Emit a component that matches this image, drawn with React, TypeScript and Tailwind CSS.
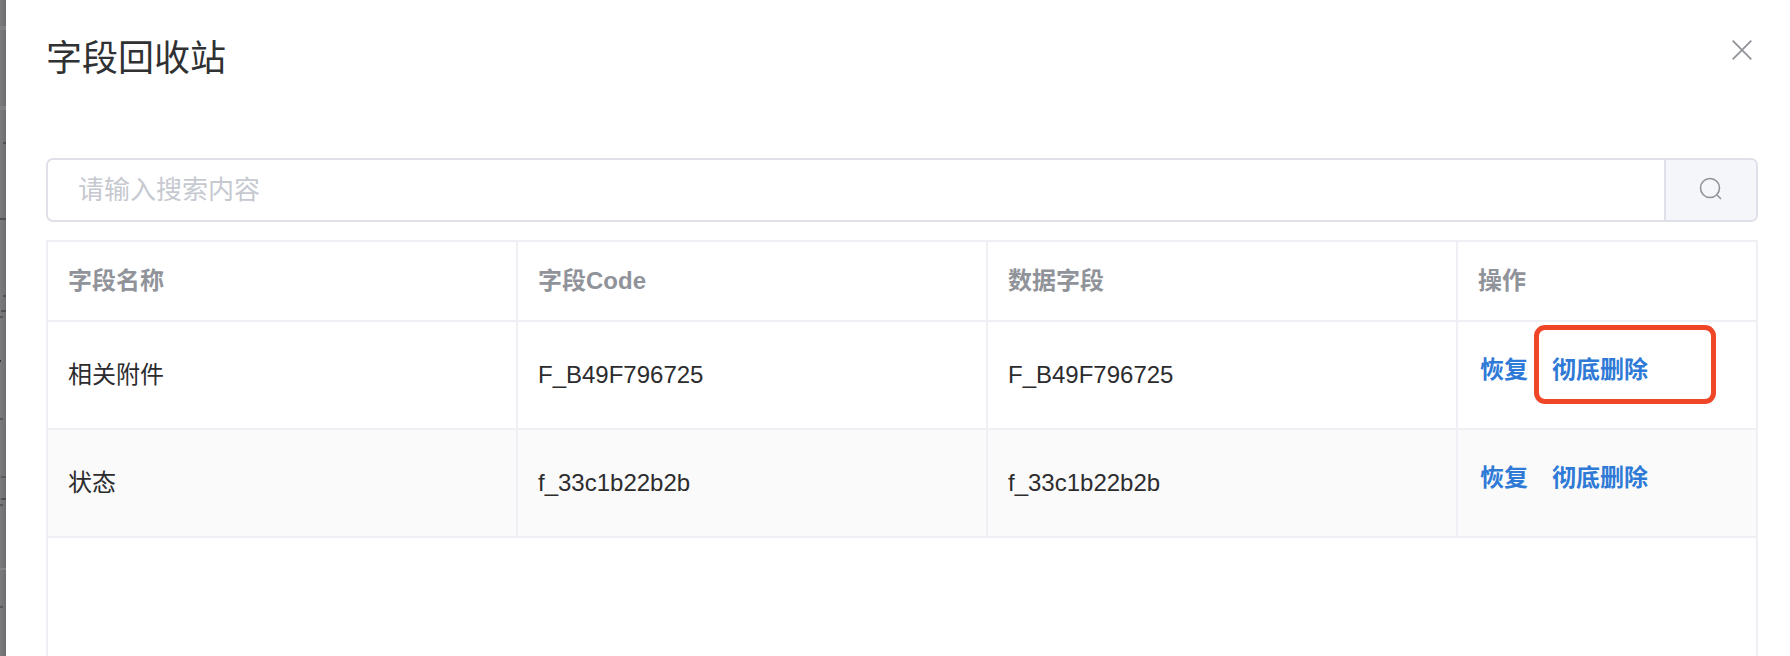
import React from "react";

const cjk = "font-['Liberation_Sans','Noto_Sans_CJK_SC',sans-serif]";
const rows = [
  { name: "相关附件", code: "F_B49F796725", field: "F_B49F796725", striped: false, marked: true },
  { name: "状态", code: "f_33c1b22b2b", field: "f_33c1b22b2b", striped: true, marked: false },
];

const ticks = [
  { top: "top-[142px]", cls: "left-[3px] w-[3px] h-[2px] bg-[#4f4f52]" },
  { top: "top-[218px]", cls: "left-0 w-[6px] h-[2px] bg-[#4f4f52]" },
  { top: "top-[295px]", cls: "left-[3px] w-[3px] h-[2px] bg-[#515154]" },
  { top: "top-[310px]", cls: "left-[1px] w-[5px] h-[2px] bg-[#515154]" },
  { top: "top-[316px]", cls: "left-0 w-[3px] h-[2px] bg-[#59595c]" },
  { top: "top-[360px]", cls: "left-0 w-[1px] h-[2px] bg-[#333335]" },
  { top: "top-[418px]", cls: "left-0 w-[3px] h-[2px] bg-[#59595c]" },
  { top: "top-[476px]", cls: "left-[1px] w-[5px] h-[2px] bg-[#59595c]" },
  { top: "top-[498px]", cls: "left-[1px] w-[5px] h-[2px] bg-[#515154]" },
  { top: "top-[504px]", cls: "left-0 w-[3px] h-[2px] bg-[#59595c]" },
  { top: "top-[606px]", cls: "left-0 w-[3px] h-[2px] bg-[#59595c]" },
  { top: "top-[26px]", cls: "left-0 w-[6px] h-[4px] bg-[#808083]" },
  { top: "top-[106px]", cls: "left-0 w-[6px] h-[4px] bg-[#808083]" },
  { top: "top-[568px]", cls: "left-0 w-[6px] h-[2px] bg-[#858588]" },
];

function Cell({ children, last }: { children: React.ReactNode; last?: boolean }) {
  return (
    <div className={`flex items-center pl-[20px] ${last ? "w-[298px]" : "w-[470px] border-r-2 border-[#eef0f6]"}`}>
      {children}
    </div>
  );
}

export default function App() {
  return (
    <div className={`flex h-[656px] w-[1790px] overflow-hidden bg-white ${cjk}`}>
      <div className="relative w-[6px] shrink-0 bg-gradient-to-r from-[#7b7b7d] to-[#6e6e71]">
        {ticks.map((t) => (
          <span key={t.top} className={`absolute ${t.top} ${t.cls}`} />
        ))}
      </div>
      <div className="relative flex min-w-0 flex-1 flex-col pl-[40px] pr-[32px]">
        <div className="flex h-[158px] shrink-0 items-start justify-between">
          <h1 className="mt-[35px] text-[36px] leading-[48px] font-normal text-[#303133]">字段回收站</h1>
          <svg className="mt-[40px] mr-[6px]" width="20" height="20" viewBox="0 0 20 20" fill="none" stroke="#909399" strokeWidth="1.8">
            <path d="M0.7 0.7 19.3 19.3M19.3 0.7 0.7 19.3" />
          </svg>
        </div>
        <div className="flex h-[64px] shrink-0 overflow-hidden rounded-[7px] border-2 border-[#e0e1e8]">
          <div className="flex flex-1 items-center pl-[30px] text-[26px] text-[#c6c9d0]">请输入搜索内容</div>
          <div className="flex w-[92px] items-center justify-center border-l-2 border-[#e0e1e8] bg-[#f5f6fa]">
            <svg className="mb-[2px] mr-[1px]" width="24" height="24" viewBox="0 0 24 24" fill="none" stroke="#909399" strokeWidth="1.6">
              <circle cx="11" cy="11" r="9.5" />
              <path d="M18 18 22 22" />
            </svg>
          </div>
        </div>
        <div className="mt-[18px] flex min-h-0 flex-1 flex-col border-x-2 border-t-2 border-[#eef0f6]">
          <div className="flex h-[80px] shrink-0 border-b-2 border-[#eef0f6] text-[24px] font-bold text-[#909399]">
            <Cell>字段名称</Cell>
            <Cell>字段Code</Cell>
            <Cell>数据字段</Cell>
            <Cell last>操作</Cell>
          </div>
          {rows.map((r) => (
            <div
              key={r.name}
              className={`flex h-[108px] shrink-0 border-b-2 border-[#eef0f6] text-[24px] text-[#2c2c2e] ${r.striped ? "bg-[#fafafa]" : "bg-white"}`}
            >
              <Cell><span>{r.name}</span></Cell>
              <Cell><span>{r.code}</span></Cell>
              <Cell><span>{r.field}</span></Cell>
              <Cell last>
                <div className="relative mb-[10px] ml-[2px] flex gap-[24px] font-semibold text-[#2f7ad6]">
                  <span>恢复</span>
                  <span>彻底删除</span>
                  {r.marked && (
                    <div className="absolute top-[-27px] left-[54px] h-[79px] w-[182px] rounded-[11px] border-[5px] border-[#ef4628]" />
                  )}
                </div>
              </Cell>
            </div>
          ))}
          <div className="flex-1 bg-white" />
        </div>
      </div>
    </div>
  );
}
